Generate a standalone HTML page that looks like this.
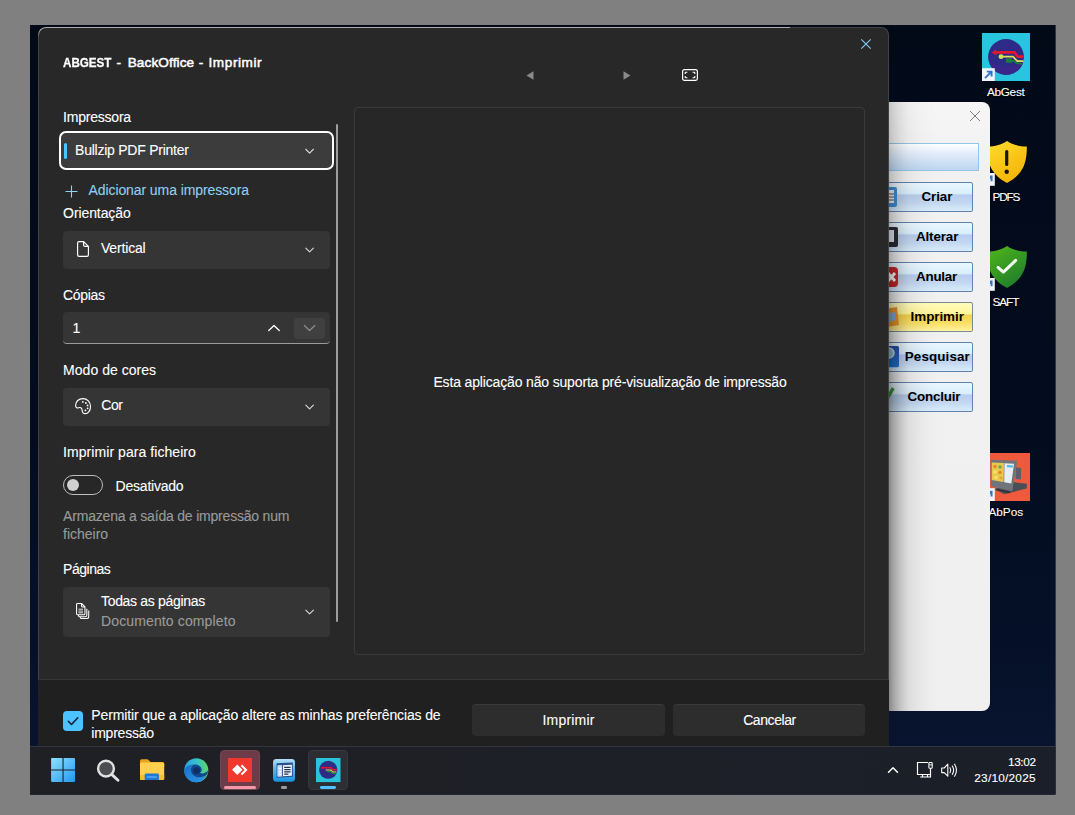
<!DOCTYPE html><html lang="pt"><head><meta charset="utf-8"><title>ABGEST - BackOffice - Imprimir</title><style>
html,body{margin:0;padding:0}
body{width:1075px;height:815px;background:#808080;overflow:hidden;position:relative;font-family:"Liberation Sans",sans-serif}
.a{position:absolute}
.t{position:absolute;white-space:nowrap;line-height:1;color:#fff;-webkit-text-stroke:0.1px currentColor}
#desk{position:absolute;left:0;top:0;width:1075px;height:815px;clip-path:inset(25px 19.6px 20.6px 30px);background:#030b1c}
#wall{left:30px;top:25px;width:1026px;height:770px;background:linear-gradient(180deg,#020a18 0%,#030c1f 55%,#06112a 85%,#0a1633 100%)}
.dl{text-shadow:0 1px 2px #000,0 0 2px #000}
#win{left:560px;top:102px;width:430px;height:609px;background:linear-gradient(180deg,#f6f6f6 0,#f1f1f1 60px,#f0f0f0 100%);border-radius:8px}
.wb{position:absolute;left:840px;width:130.500px;height:27.500px;border:1px solid #5f84ae;border-radius:2px;background:linear-gradient(180deg,#ecf7fe 0%,#d9eefb 38%,#b8cdec 43%,#c3d7f1 70%,#d9edfb 100%)}
.wb.y{background:linear-gradient(180deg,#fffcbc 0%,#fff59a 38%,#f4d24c 43%,#f9de62 70%,#fff2a0 100%);border-color:#7c8b96}
.wt{font-weight:700;color:#000}
#dlg{left:38px;top:27px;width:851px;height:740px;background:#282828;border-radius:8px;box-shadow:0 0 0 1px rgba(90,90,90,.55) inset}
#foot{left:38px;top:679px;width:851px;height:90px;background:#202020;border-top:1px solid #383838}
.cb{position:absolute;left:63px;width:267px;background:#353535;border-radius:4px}
.btn{position:absolute;top:704px;height:32px;background:#2d2d2d;border-radius:4px;box-shadow:0 1px 0 rgba(255,255,255,.06) inset}
#task{left:30px;top:746px;width:1026px;height:49px;background:linear-gradient(90deg,#1f2024 0,#1e2026 40%,#1b1f29 100%);border-top:1px solid #33363f;box-sizing:border-box}
svg{position:absolute;overflow:visible}
</style></head><body><div id="desk"><div id="wall" class="a"></div><svg style="left:982px;top:33px" width="48" height="48" viewBox="0 0 48 48">
<rect width="48" height="48" fill="#27c6de"/>
<circle cx="24" cy="24" r="17.900" fill="#2e2b88"/>
<path d="M6.600 27 Q16 36 30 33 Q38 31 41.600 27 Q40 38 28 41.500 Q12 43 6.600 27Z" fill="#3a2788"/>
<path d="M12 19.400 H32.500 L35.800 23.700 H41.500" fill="none" stroke="#e5162d" stroke-width="2.700"/>
<path d="M9.600 19.400 l4.500 -3 v6z" fill="#e5162d"/>
<path d="M19 23.600 H31 L35.300 28.100 H41.500" fill="none" stroke="#e2df58" stroke-width="1.600"/>
<path d="M24.700 26 H29 V29 H24.700Z M29 27.500 L32 27.800 L34.500 30.300 L40.600 30.700" fill="#17813a" stroke="#17813a" stroke-width="1.600"/>
<circle cx="19" cy="23.700" r="2.400" fill="#c4e84c"/>
<g transform="translate(0 35.200)"><rect x="0" y="0" width="12.800" height="12.800" fill="#f2f4f7"/><path d="M3 10 L9.300 3.700 M4.800 3.400 H9.600 V8.200" fill="none" stroke="#2f74cc" stroke-width="1.900"/></g>
</svg><span class="t dl" style="left:986.9px;top:86.70px;font-size:11.8px;letter-spacing:-0.291px;">AbGest</span><svg style="left:986.500px;top:141px" width="40" height="42" viewBox="0 0 39.600 42">
<defs><linearGradient id="gy" x1="0.200" y1="0" x2="0.800" y2="1"><stop offset="0" stop-color="#ffd92a"/><stop offset="1" stop-color="#f2b104"/></linearGradient></defs>
<path d="M19.800 0 C15 3.500 8 5.500 0 5.500 C0 5.500 -0.500 17 3 25 C6.500 33 13 38.500 19.800 42 C26.600 38.500 33.100 33 36.600 25 C40.100 17 39.600 5.500 39.600 5.500 C31.600 5.500 24.600 3.500 19.800 0Z" fill="url(#gy)"/>
<rect x="17.900" y="9" width="3.200" height="16" rx="1.500" fill="#1c1608"/><circle cx="19.500" cy="30.800" r="2.200" fill="#1c1608"/>
</svg><svg style="left:982px;top:173.200px" width="12.800" height="12.800" viewBox="0 0 12.800 12.800"><rect x="0" y="0" width="12.800" height="12.800" fill="#f2f4f7"/><path d="M3 10 L9.300 3.700 M4.800 3.400 H9.600 V8.200" fill="none" stroke="#2f74cc" stroke-width="1.900"/></svg><span class="t dl" style="left:992.5px;top:191.80px;font-size:11.8px;letter-spacing:-1.192px;">PDFS</span><svg style="left:986.500px;top:246px" width="40" height="42" viewBox="0 0 39.600 42">
<defs><linearGradient id="gg" x1="0.200" y1="0" x2="0.800" y2="1"><stop offset="0" stop-color="#4fb31c"/><stop offset="1" stop-color="#1b7a2c"/></linearGradient></defs>
<path d="M19.800 0 C15 3.500 8 5.500 0 5.500 C0 5.500 -0.500 17 3 25 C6.500 33 13 38.500 19.800 42 C26.600 38.500 33.100 33 36.600 25 C40.100 17 39.600 5.500 39.600 5.500 C31.600 5.500 24.600 3.500 19.800 0Z" fill="url(#gg)"/>
<path d="M10.800 21.300 L16.200 26.200 L28.500 14.400" fill="none" stroke="#f4fbf0" stroke-width="3" stroke-linecap="round" stroke-linejoin="round"/>
</svg><svg style="left:982px;top:278.200px" width="12.800" height="12.800" viewBox="0 0 12.800 12.800"><rect x="0" y="0" width="12.800" height="12.800" fill="#f2f4f7"/><path d="M3 10 L9.300 3.700 M4.800 3.400 H9.600 V8.200" fill="none" stroke="#2f74cc" stroke-width="1.900"/></svg><span class="t dl" style="left:992.5px;top:296.80px;font-size:11.8px;letter-spacing:-1.089px;">SAFT</span><svg style="left:982px;top:453px" width="48" height="48" viewBox="0 0 48 48">
<rect width="48" height="48" fill="#f05a3c"/>
<path d="M31 29 L45 30.800 L44.600 35.400 L22.500 41.300 L12.500 36.200Z" fill="#4a4e55"/>
<path d="M34 14.500 L39.200 15 L38.800 26.500 L33.600 26Z" fill="#5a5e66"/>
<path d="M8.700 6.700 L35.200 7.700 L30.300 38.200 L8.700 33.300Z" fill="#70757d"/>
<path d="M9.700 9.500 L22 10 L21.500 29 L9.700 27Z" fill="#e8c94a"/>
<path d="M22.500 10.200 L32 10.800 L29.300 30.500 L22.200 29.200Z" fill="#e9eef4"/>
<path d="M25 12 L31 12.400 L30.700 14.600 L25 14.200Z" fill="#4ab6e0"/>
<circle cx="13" cy="13.500" r="1.700" fill="#e8802e"/><circle cx="18" cy="14" r="1.700" fill="#6aa84f"/><circle cx="13" cy="19" r="1.700" fill="#f4e27a"/><circle cx="18" cy="19.500" r="1.700" fill="#e8802e"/><circle cx="14" cy="24.500" r="1.700" fill="#f4e27a"/><circle cx="19" cy="25" r="1.500" fill="#e8a02e"/>
<path d="M14 36.500 L28 39.500" stroke="#2e3136" stroke-width="1.500"/>
<g transform="translate(0 35.200)"><rect x="0" y="0" width="12.800" height="12.800" fill="#f2f4f7"/><path d="M3 10 L9.300 3.700 M4.800 3.400 H9.600 V8.200" fill="none" stroke="#2f74cc" stroke-width="1.900"/></g>
</svg><span class="t dl" style="left:988.4px;top:506.60px;font-size:11.8px;letter-spacing:0.007px;">AbPos</span><div id="win" class="a"></div><svg style="left:970px;top:111px" width="10" height="10" viewBox="0 0 10 10"><path d="M0 0 L10 10 M10 0 L0 10" stroke="#7d7d7d" stroke-width="1" fill="none"/></svg><div class="a" style="left:700px;top:143px;width:276.600px;height:25.500px;border:1px solid #93c6e6;background:linear-gradient(180deg,#ffffff 0%,#e4eefa 35%,#bdd5f1 100%)"></div><div class="wb" style="top:182px"></div><span class="t" style="left:921.4px;top:190.00px;font-size:13.4px;font-weight:700;color:#000;letter-spacing:-0.053px;-webkit-text-stroke:0;">Criar</span><div class="wb" style="top:222px"></div><span class="t" style="left:915.9px;top:230.00px;font-size:13.4px;font-weight:700;color:#000;letter-spacing:-0.110px;-webkit-text-stroke:0;">Alterar</span><div class="wb" style="top:262px"></div><span class="t" style="left:916.0px;top:270.00px;font-size:13.4px;font-weight:700;color:#000;letter-spacing:-0.237px;-webkit-text-stroke:0;">Anular</span><div class="wb y" style="top:302px"></div><span class="t" style="left:910.6px;top:310.00px;font-size:13.4px;font-weight:700;color:#000;letter-spacing:-0.047px;-webkit-text-stroke:0;">Imprimir</span><div class="wb" style="top:342px"></div><span class="t" style="left:904.8px;top:350.00px;font-size:13.4px;font-weight:700;color:#000;letter-spacing:0.120px;-webkit-text-stroke:0;">Pesquisar</span><div class="wb" style="top:382px"></div><span class="t" style="left:907.5px;top:390.00px;font-size:13.4px;font-weight:700;color:#000;letter-spacing:-0.202px;-webkit-text-stroke:0;">Concluir</span><svg style="left:880px;top:186px" width="20" height="22"><rect x="0" y="1" width="17" height="20" rx="2" fill="#3d8fd6"/><rect x="2" y="4" width="12" height="13" fill="#e8f0f8"/><path d="M9 8 h5 M9 11 h5 M9 14 h5" stroke="#555" stroke-width="1.2"/></svg><svg style="left:880px;top:226px" width="20" height="22"><rect x="0" y="1" width="18" height="20" rx="2" fill="#2a2d33"/><rect x="2" y="4" width="12" height="12" fill="#dfe8f2"/></svg><svg style="left:880px;top:266px" width="20" height="22"><rect x="0" y="1" width="18" height="20" rx="4" fill="#c8262a"/><path d="M8 7 L15 15 M15 7 L8 15" stroke="#fff" stroke-width="3"/></svg><svg style="left:880px;top:306px" width="20" height="22"><path d="M4 3 L17 1 L19 19 L6 21Z" fill="#e8952e"/><path d="M6 8 L15 6 L16 14 L8 16Z" fill="#7fb0d8"/></svg><svg style="left:880px;top:346px" width="20" height="22"><defs><linearGradient id="pq" x1="0" y1="0" x2="0" y2="1"><stop offset="0" stop-color="#2c4fae"/><stop offset="1" stop-color="#1b7ad9"/></linearGradient></defs><rect x="2" y="0" width="17" height="21.300" rx="1.500" fill="url(#pq)"/><circle cx="9" cy="7" r="5" fill="#8fc8d8" stroke="#cfe0ea" stroke-width="1.500"/></svg><svg style="left:880px;top:386px" width="20" height="22"><path d="M3 9 L7 13 L13.200 2.200" fill="none" stroke="#3c9c3a" stroke-width="3.400" stroke-linejoin="round"/></svg><div class="a" style="left:889px;top:102px;width:52px;height:609px;background:linear-gradient(90deg,rgba(0,0,0,.43) 0,rgba(0,0,0,.30) 5px,rgba(0,0,0,.21) 10px,rgba(0,0,0,.135) 15px,rgba(0,0,0,.08) 20px,rgba(0,0,0,.035) 30px,rgba(0,0,0,.01) 40px,rgba(0,0,0,0) 50px);-webkit-mask-image:linear-gradient(180deg,rgba(0,0,0,.45) 0,rgba(0,0,0,.6) 90px,#000 300px);mask-image:linear-gradient(180deg,rgba(0,0,0,.45) 0,rgba(0,0,0,.6) 90px,#000 300px)"></div><div id="dlg" class="a"></div><div id="foot" class="a"></div><div class="a" style="left:38px;top:27px;width:752px;height:12px;box-sizing:border-box;border-top:1px solid #adadad;border-left:1px solid #adadad;border-top-left-radius:8px;-webkit-mask-image:linear-gradient(180deg,#000 0,#000 3px,transparent 11px);mask-image:linear-gradient(180deg,#000 0,#000 3px,transparent 11px)"></div><span class="t" style="left:62.9px;top:55.90px;font-size:13.6px;-webkit-text-stroke:0.5px #fff;white-space:pre;"><span style="display:inline-block;font-weight:700;transform:scaleX(.855);transform-origin:0 50%;margin-right:-8.2px;-webkit-text-stroke:0.3px #fff">ABGEST</span><span style="letter-spacing:1.4px"> - </span><span style="letter-spacing:.11px">BackOffice</span><span style="letter-spacing:.73px"> - </span><span style="letter-spacing:.57px">Imprimir</span></span><svg style="left:861px;top:39px" width="10" height="10" viewBox="0 0 10 10"><path d="M0.300 0.300 L9.700 9.700 M9.700 0.300 L0.300 9.700" stroke="#7fd0f7" stroke-width="1.1" fill="none"/></svg><svg style="left:526px;top:70.500px" width="8" height="9" viewBox="0 0 8 9"><path d="M7.500 0.300 V8.700 L0.500 4.500Z" fill="#8a8a8a"/></svg><svg style="left:622.500px;top:70.500px" width="8" height="9" viewBox="0 0 8 9"><path d="M0.500 0.300 V8.700 L7.500 4.500Z" fill="#8a8a8a"/></svg><svg style="left:682px;top:69px" width="16" height="12" viewBox="0 0 16 12"><rect x="0.600" y="0.600" width="14.800" height="10.800" rx="1.800" fill="none" stroke="#fff" stroke-width="1.200"/>
<path d="M3.200 5 V3.800 Q3.200 3.200 3.800 3.200 H5.400 M10.600 3.200 H12.200 Q12.800 3.200 12.800 3.800 V5 M12.800 7 V8.200 Q12.800 8.800 12.200 8.800 H10.600 M5.400 8.800 H3.800 Q3.200 8.800 3.200 8.200 V7" fill="none" stroke="#fff" stroke-width="1.100"/></svg><div class="a" style="left:354px;top:107px;width:510.500px;height:548px;box-sizing:border-box;border:1px solid #3a3a3a;border-radius:4px;background:#272727"></div><span class="t" style="left:433.4px;top:374.50px;font-size:14px;letter-spacing:-0.155px;">Esta aplicação não suporta pré-visualização de impressão</span><span class="t" style="left:63.1px;top:110.30px;font-size:14px;letter-spacing:-0.223px;">Impressora</span><div class="a" style="left:59px;top:131px;width:275px;height:39px;box-sizing:border-box;border:2px solid #fff;border-radius:7px;background:#3c3c3c"></div><div class="a" style="left:64.200px;top:143px;width:3px;height:16px;border-radius:1.500px;background:#4cc2ff"></div><span class="t" style="left:75.1px;top:143.40px;font-size:14px;letter-spacing:-0.246px;">Bullzip PDF Printer</span><svg class="a" style="left:0;top:0" width="1" height="1"><path d="M305.8 149.25 L309.6 153.14999999999998 L313.40000000000003 149.25" fill="none" stroke="#d4d4d4" stroke-width="1.15" stroke-linecap="round" stroke-linejoin="round"/></svg><svg style="left:65px;top:184.500px" width="13" height="13" viewBox="0 0 13 13"><path d="M6.500 0.500 V12.500 M0.500 6.500 H12.500" stroke="#8fd4f2" stroke-width="1.100" fill="none"/></svg><span class="t" style="left:88.5px;top:182.90px;font-size:14px;color:#8fd1ec;letter-spacing:-0.089px;">Adicionar uma impressora</span><span class="t" style="left:63.1px;top:206.00px;font-size:14px;letter-spacing:-0.098px;">Orientação</span><div class="cb" style="top:231px;height:38px"></div><svg style="left:77px;top:241px" width="12" height="16" viewBox="0 0 12 16"><path d="M2 0.600 H6.600 L11.400 5.400 V14 Q11.400 15.400 10 15.400 H2 Q0.600 15.400 0.600 14 V2 Q0.600 0.600 2 0.600Z M6.600 0.800 V4 Q6.600 5.400 8 5.400 H11.200" fill="none" stroke="#fff" stroke-width="1.150" stroke-linejoin="round"/></svg><span class="t" style="left:100.9px;top:241.00px;font-size:14px;letter-spacing:-0.153px;">Vertical</span><svg class="a" style="left:0;top:0" width="1" height="1"><path d="M305.8 248.05 L309.6 251.95 L313.40000000000003 248.05" fill="none" stroke="#d4d4d4" stroke-width="1.15" stroke-linecap="round" stroke-linejoin="round"/></svg><span class="t" style="left:63.1px;top:287.90px;font-size:14px;letter-spacing:-0.349px;">Cópias</span><div class="cb" style="top:312px;height:32px;border-bottom:1px solid #9a9a9a;box-sizing:border-box;border-radius:4px 4px 4px 4px"></div><span class="t" style="left:72.5px;top:321.00px;font-size:14px;">1</span><svg class="a" style="left:0;top:0" width="1" height="1"><path d="M268.75 330.5 L274 325.5 L279.25 330.5" fill="none" stroke="#fff" stroke-width="1.3" stroke-linecap="round" stroke-linejoin="round"/></svg><div class="a" style="left:294px;top:317.500px;width:31px;height:21px;border-radius:4px;background:#404040"></div><svg class="a" style="left:0;top:0" width="1" height="1"><path d="M304.35 325.5 L309.6 330.5 L314.85 325.5" fill="none" stroke="#8c8c8c" stroke-width="1.2" stroke-linecap="round" stroke-linejoin="round"/></svg><span class="t" style="left:63.1px;top:362.70px;font-size:14px;letter-spacing:0.030px;">Modo de cores</span><div class="cb" style="top:388px;height:38px"></div><svg style="left:74.900px;top:397.900px" width="16" height="16.400" viewBox="0 0 16 16.400"><path d="M0.600 7.400 C0.600 3.400 3.800 0.600 7.800 0.600 C12.300 0.600 15.500 4 15.500 8.400 C15.500 12.600 13.200 15.700 10.200 15.700 C8.200 15.700 7.300 14 7.100 12.200 C6.900 10.400 6.100 9.300 4.700 9.500 C3.500 9.700 2.700 10.300 1.800 9.800 C0.900 9.300 0.600 8.500 0.600 7.400Z" fill="none" stroke="#fff" stroke-width="1.150"/>
<circle cx="7.800" cy="3.900" r="0.900" fill="#fff"/><circle cx="10.900" cy="5" r="0.900" fill="#fff"/><circle cx="12.600" cy="7.400" r="0.900" fill="#fff"/><circle cx="12.600" cy="10.300" r="0.900" fill="#fff"/><circle cx="10.400" cy="12.400" r="0.900" fill="#fff"/></svg><span class="t" style="left:101.3px;top:397.80px;font-size:14px;letter-spacing:-0.454px;">Cor</span><svg class="a" style="left:0;top:0" width="1" height="1"><path d="M305.8 405.05 L309.6 408.95 L313.40000000000003 405.05" fill="none" stroke="#d4d4d4" stroke-width="1.15" stroke-linecap="round" stroke-linejoin="round"/></svg><span class="t" style="left:63.1px;top:445.00px;font-size:14px;letter-spacing:0.060px;">Imprimir para ficheiro</span><div class="a" style="left:63px;top:475px;width:40px;height:20px;box-sizing:border-box;border:1px solid #bdbdbd;border-radius:10px;background:#272727"></div><div class="a" style="left:67px;top:479px;width:12px;height:12px;border-radius:6px;background:#d0d0d0"></div><span class="t" style="left:115.6px;top:478.80px;font-size:14px;letter-spacing:-0.225px;">Desativado</span><span class="t" style="left:63.1px;top:509.30px;font-size:14px;color:#9b9b9b;letter-spacing:-0.197px;">Armazena a saída de impressão num</span><span class="t" style="left:63.1px;top:526.80px;font-size:14px;color:#9b9b9b;letter-spacing:-0.018px;">ficheiro</span><span class="t" style="left:63.1px;top:561.70px;font-size:14px;letter-spacing:-0.485px;">Páginas</span><div class="cb" style="top:587px;height:49.500px"></div><svg style="left:75.900px;top:603.200px" width="13.300" height="16.200" viewBox="0 0 14 17"><path d="M1.600 0.600 H6 L9.400 4 V11.400 Q9.400 12.400 8.400 12.400 H1.600 Q0.600 12.400 0.600 11.400 V1.600 Q0.600 0.600 1.600 0.600Z M5.800 0.800 V3.200 Q5.800 4.200 6.800 4.200 H9.200" fill="none" stroke="#fff" stroke-width="1.100"/>
<path d="M2.600 6.500 H7.400 M2.600 8.500 H7.400 M2.600 10.300 H7.400" stroke="#fff" stroke-width="0.900"/>
<path d="M2.600 12.600 V13.400 Q2.600 14.400 3.600 14.400 H9.800 Q11.400 14.400 11.400 12.800 V6" fill="none" stroke="#fff" stroke-width="1.100"/>
<path d="M4.600 14.600 V15.400 Q4.600 16.400 5.600 16.400 H11.200 Q13.400 16.400 13.400 14.200 V8" fill="none" stroke="#fff" stroke-width="1.100"/></svg><span class="t" style="left:101.0px;top:594.30px;font-size:14px;letter-spacing:-0.317px;">Todas as páginas</span><span class="t" style="left:101.0px;top:613.80px;font-size:14px;color:#9b9b9b;letter-spacing:0.128px;">Documento completo</span><svg class="a" style="left:0;top:0" width="1" height="1"><path d="M305.8 610.05 L309.6 613.95 L313.40000000000003 610.05" fill="none" stroke="#d4d4d4" stroke-width="1.15" stroke-linecap="round" stroke-linejoin="round"/></svg><div class="a" style="left:335.800px;top:123.500px;width:2px;height:498px;border-radius:1px;background:#9d9d9d"></div><div class="a" style="left:63px;top:711px;width:20px;height:20px;border-radius:4px;background:#4cc2ff"></div><svg style="left:63px;top:711px" width="20" height="20" viewBox="0 0 20 20"><path d="M5.300 10.300 L8.500 13.500 L14.800 6.800" fill="none" stroke="#0c1d33" stroke-width="1.550" stroke-linecap="round" stroke-linejoin="round"/></svg><span class="t" style="left:91.3px;top:708.00px;font-size:14px;letter-spacing:-0.140px;">Permitir que a aplicação altere as minhas preferências de</span><span class="t" style="left:91.3px;top:726.00px;font-size:14px;letter-spacing:-0.233px;">impressão</span><div class="btn" style="left:472px;width:193px"></div><div class="btn" style="left:673px;width:192px"></div><span class="t" style="left:542.4px;top:713.00px;font-size:14px;letter-spacing:0.219px;">Imprimir</span><span class="t" style="left:743.2px;top:713.00px;font-size:14px;letter-spacing:-0.429px;">Cancelar</span><div id="task" class="a"></div><svg style="left:51.400px;top:758.400px" width="24.100" height="23.900" viewBox="0 0 24 24"><defs><linearGradient id="wl" x1="0" y1="0" x2="1" y2="1"><stop offset="0" stop-color="#8fe2ff"/><stop offset="1" stop-color="#2397ef"/></linearGradient></defs>
<rect x="0" y="0" width="24" height="24" rx="0.800" fill="url(#wl)"/><path d="M12 0 V24 M0 12 H24" stroke="#1f2024" stroke-width="1.100"/></svg><svg style="left:96px;top:758px" width="24" height="24" viewBox="0 0 24 24"><circle cx="10" cy="10.600" r="7.900" fill="#4b4d52" stroke="#e2e2e2" stroke-width="2.400"/><path d="M16.200 16.900 L22 22.200" stroke="#e2e2e2" stroke-width="2.900" stroke-linecap="round"/></svg><svg style="left:140px;top:758.900px" width="24.200" height="21" viewBox="0 0 24.200 21"><path d="M0 2 Q0 0.300 1.700 0.300 H7.200 Q8 0.300 8.600 0.900 L10.600 2.900 H22.500 Q24.200 2.900 24.200 4.600 V8 H0Z" fill="#e8a21c"/><rect x="0" y="3.600" width="24.200" height="17.400" rx="1.600" fill="#ffd04f"/><path d="M0 16 H24.200 V19.400 Q24.200 21 22.600 21 H1.600 Q0 21 0 19.400Z" fill="#f7bd35"/><path d="M4.700 16 Q4.700 14.600 6.100 14.600 H17.500 Q18.900 14.600 18.900 16 V21 H4.700Z" fill="#1f78d8"/><rect x="6.800" y="17" width="10" height="2" fill="#4a9cf0"/></svg><svg style="left:183.700px;top:757.700px" width="24.600" height="24.600" viewBox="0 0 25 25"><defs><linearGradient id="eg" x1="0" y1="0.300" x2="1" y2="0.200"><stop offset="0" stop-color="#2b9fe4"/><stop offset="0.550" stop-color="#36c3c9"/><stop offset="1" stop-color="#5fd85a"/></linearGradient><linearGradient id="eg2" x1="0" y1="0" x2="1" y2="1"><stop offset="0" stop-color="#1a6fc6"/><stop offset="1" stop-color="#2a97ea"/></linearGradient></defs>
<circle cx="12.500" cy="12.500" r="12.200" fill="url(#eg)"/>
<path d="M0.400 13.500 C1 8.500 5.500 6.300 10.500 6.600 C6.500 8.500 6 13 8.500 16.500 C11.500 20.500 17.500 20.500 22.500 17.500 C20.500 22 16.500 24.700 12.500 24.700 C5.800 24.700 0.400 19.500 0.400 13.500Z" fill="url(#eg2)"/>
<path d="M10.500 6.600 C14.500 6.200 18.200 9 18 12.200 C17.900 13.600 17 14.400 16.200 15 C18.500 16.500 22.500 15.500 24.200 12.800 C24.600 15 23.800 16.500 22.500 17.500 C17.500 20.500 11.500 20.500 8.500 16.500 C6 13 6.500 8.500 10.500 6.600Z" fill="#14468c"/>
<ellipse cx="12.800" cy="12.800" rx="3.600" ry="3.400" fill="#0f2f66"/></svg><div class="a" style="left:220px;top:750px;width:40px;height:39.500px;border-radius:4.500px;background:#6c3d48;box-shadow:0 0 0 1px rgba(255,255,255,.06) inset"></div><svg style="left:228px;top:758px" width="24" height="24" viewBox="0 0 24 24"><rect width="24" height="24" fill="#f0382f"/><path d="M9.300 6.600 L14.500 11.800 L9.300 17 L4.100 11.800Z" fill="#fff"/><path d="M12.700 8 L14.200 6.600 L19.500 11.900 L14.200 17.200 L12.700 15.800 L16.600 11.900Z" fill="#fff"/></svg><div class="a" style="left:224px;top:786px;width:32px;height:3px;border-radius:1.500px;background:#f597a8"></div><svg style="left:272.600px;top:758.700px" width="22" height="22.700" viewBox="0 0 22 22.700"><defs><linearGradient id="dg" x1="0" y1="0" x2="0" y2="1"><stop offset="0" stop-color="#b4dffa"/><stop offset="0.450" stop-color="#55b4ee"/><stop offset="1" stop-color="#1795e0"/></linearGradient></defs>
<rect x="0" y="0" width="22" height="22.700" rx="3.400" fill="url(#dg)"/>
<path d="M3.600 4.200 L19.800 3.400 V17.800 L3.600 18.800Z" fill="#2d4d8c"/>
<path d="M4.600 6.400 L18.900 5.800 V16.800 L4.600 17.600Z" fill="#eef4fb"/>
<path d="M4.600 6.400 L9.200 6.200 V17.300 L4.600 17.600Z" fill="#c9d9ec"/>
<path d="M9.500 6 V17.400" stroke="#2d4d8c" stroke-width="0.900"/>
<path d="M6 9.500 H8.200 M6 12.800 H8.200 M6 15.400 H8.200" stroke="#f8fbff" stroke-width="1.400"/>
<path d="M11.200 8.300 H17.600 M11.200 10.600 H17.600 M11.200 12.900 H17.600" stroke="#26324f" stroke-width="1.200"/><path d="M11.200 15.200 H15.400" stroke="#26324f" stroke-width="1.200"/>
</svg><div class="a" style="left:280.800px;top:786px;width:6px;height:2.800px;border-radius:1.300px;background:#9a9a9a"></div><div class="a" style="left:308.300px;top:750px;width:39.600px;height:39.500px;border-radius:4.500px;background:#2c2e34;box-shadow:0 0 0 1px rgba(255,255,255,.05) inset"></div><svg style="left:316px;top:757.900px" width="24.500" height="24.100" viewBox="0 0 48 48" preserveAspectRatio="none">
<rect width="48" height="48" fill="#2ac3dc"/><circle cx="24" cy="23.500" r="18" fill="#2f2c86"/>
<path d="M11 19.500 H29 L33 23.500 H41" fill="none" stroke="#e8142c" stroke-width="3"/><path d="M9 19.500 l4 -3 v6z" fill="#e8142c"/>
<path d="M19 24 H29 L33 28 H40" fill="none" stroke="#e6e04a" stroke-width="2.200"/><path d="M22 27 H29 L32 30.500 H38" fill="none" stroke="#1f8a3a" stroke-width="2.400"/></svg><div class="a" style="left:320.200px;top:786px;width:15.700px;height:2.800px;border-radius:1.400px;background:#4cc2ff"></div><svg class="a" style="left:0;top:0" width="1" height="1"><path d="M888.500 772.300 L893 767.800 L897.500 772.300" fill="none" stroke="#fff" stroke-width="1.500" stroke-linecap="round" stroke-linejoin="round"/></svg><svg style="left:917px;top:762.100px" width="17" height="17" viewBox="0 0 17 17"><path d="M11 0.500 H0.500 V12.500 H12.800 M5.500 12.500 V15 M10.500 12.500 V15 M3.200 15 H13.500 M13.500 6.300 V15.600" fill="none" stroke="#fff" stroke-width="1.200"/><rect x="11.900" y="0.500" width="3.300" height="5.800" rx="0.800" fill="none" stroke="#fff" stroke-width="1.100"/><path d="M12.300 2.900 H15" stroke="#fff" stroke-width="0.900"/></svg><svg style="left:941px;top:762.500px" width="17" height="15" viewBox="0 0 17 15"><path d="M0.700 5 H3.200 L6.800 1.200 V13.200 L3.200 9.600 H0.700Z" fill="none" stroke="#fff" stroke-width="1.100" stroke-linejoin="round"/><path d="M9 4.700 Q10.600 7.200 9 9.700 M11.300 3 Q14 7.200 11.300 11.400 M13.600 1.200 Q17.400 7.200 13.600 13.200" fill="none" stroke="#fff" stroke-width="1.100" stroke-linecap="round"/></svg><span class="t" style="left:1007.9px;top:756.90px;font-size:11.8px;letter-spacing:-0.326px;">13:02</span><span class="t" style="left:974.3px;top:772.80px;font-size:11.8px;letter-spacing:0.245px;">23/10/2025</span></div></body></html>
